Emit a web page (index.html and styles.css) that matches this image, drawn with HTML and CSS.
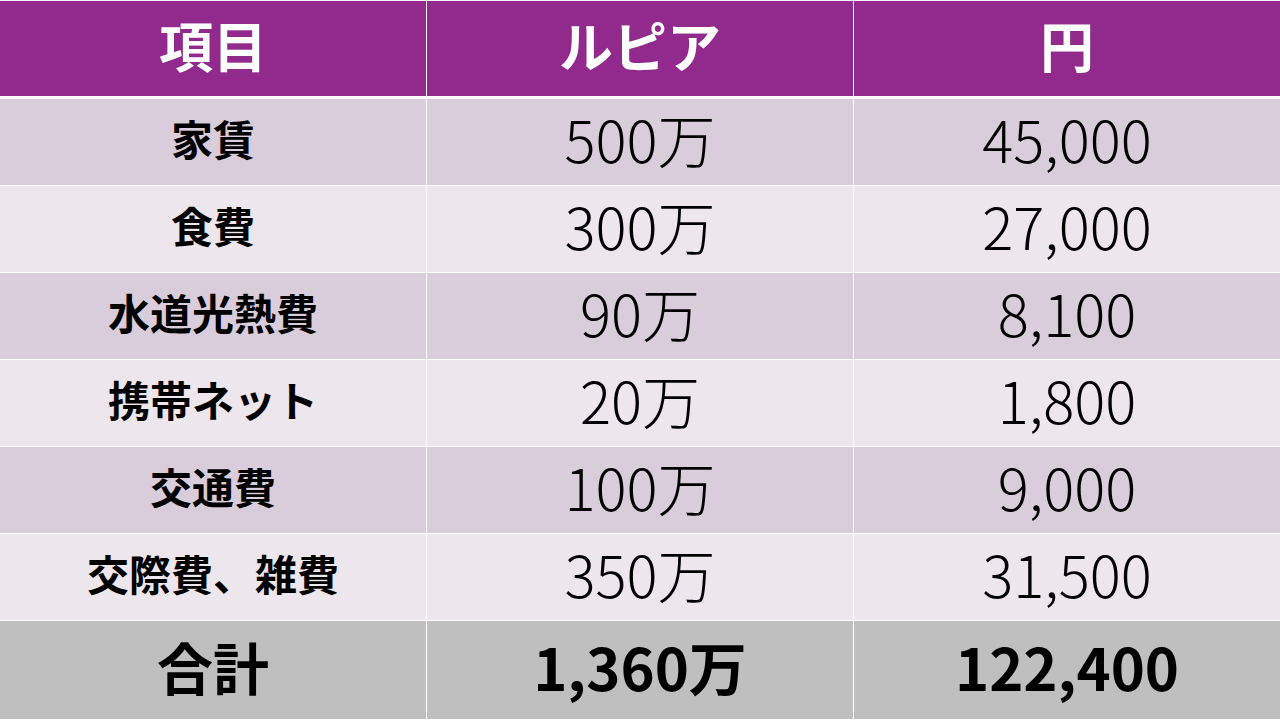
FILE: index.html
```html
<!DOCTYPE html>
<html lang="ja">
<head>
<meta charset="utf-8">
<link rel="stylesheet" href="styles.css">
</head>
<body>
<div class="table">
  <div class="row head">
    <div class="cell">項目</div>
    <div class="cell">ルピア</div>
    <div class="cell">円</div>
  </div>
  <div class="row odd">
    <div class="cell label">家賃</div>
    <div class="cell num">500万</div>
    <div class="cell num">45,000</div>
  </div>
  <div class="row even">
    <div class="cell label">食費</div>
    <div class="cell num">300万</div>
    <div class="cell num">27,000</div>
  </div>
  <div class="row odd">
    <div class="cell label">水道光熱費</div>
    <div class="cell num">90万</div>
    <div class="cell num">8,100</div>
  </div>
  <div class="row even">
    <div class="cell label">携帯ネット</div>
    <div class="cell num">20万</div>
    <div class="cell num">1,800</div>
  </div>
  <div class="row odd">
    <div class="cell label">交通費</div>
    <div class="cell num">100万</div>
    <div class="cell num">9,000</div>
  </div>
  <div class="row even">
    <div class="cell label">交際費、雑費</div>
    <div class="cell num">350万</div>
    <div class="cell num">31,500</div>
  </div>
  <div class="row total">
    <div class="cell tlabel">合計</div>
    <div class="cell tnum">1,360万</div>
    <div class="cell tnum">122,400</div>
  </div>
</div>
</body>
</html>
```
FILE: styles.css
```css
html, body {
  margin: 0;
  padding: 0;
  background: #ffffff;
}
body {
  width: 1280px;
  height: 720px;
  overflow: hidden;
  font-family: "Noto Sans CJK JP", "Noto Sans", sans-serif;
}
.table {
  display: flex;
  flex-direction: column;
  gap: 1px;
  padding: 1px 0;
  background: #ffffff;
}
.row {
  display: grid;
  grid-template-columns: 426px 426px 426px;
  column-gap: 1px;
  height: 86px;
}
.cell {
  display: flex;
  align-items: center;
  justify-content: center;
  color: #000;
  line-height: 1;
  padding-bottom: 8px;
  box-sizing: border-box;
}
.head {
  height: 95px;
  margin-bottom: 2px;
}
.head .cell {
  background: #922A8E;
  color: #ffffff;
  font-weight: 700;
  font-size: 54px;
}
.odd .cell { background: #DACDDB; }
.even .cell { background: #EDE6ED; }
.label {
  font-weight: 700;
  font-size: 42px;
}
.num {
  font-weight: 300;
  font-size: 58px;
}
.total {
  height: 98px;
}
.total .cell { background: #BFBFBF; }
.tlabel {
  font-weight: 700;
  font-size: 56px;
}
.tnum {
  font-weight: 700;
  font-size: 58px;
}
```
